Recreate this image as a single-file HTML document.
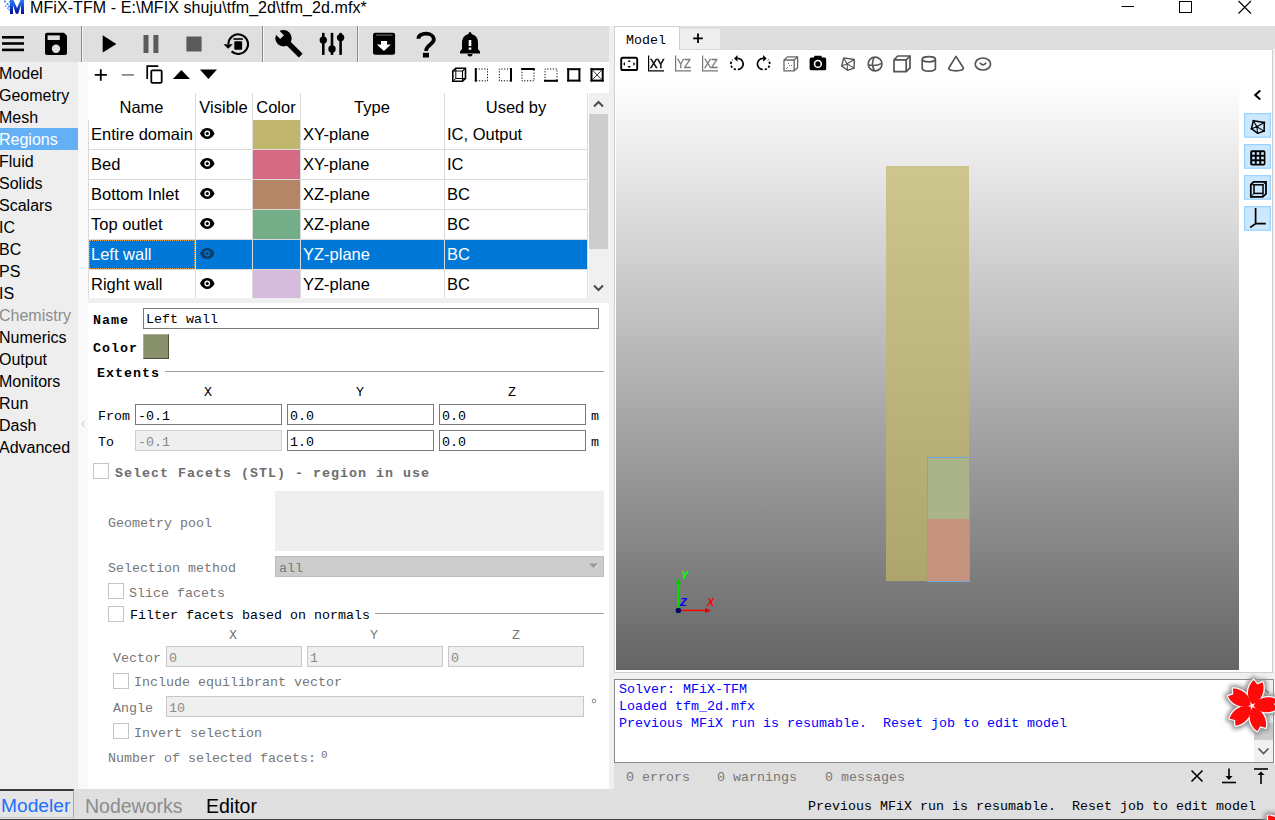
<!DOCTYPE html>
<html><head><meta charset="utf-8">
<style>
*{margin:0;padding:0;box-sizing:border-box}
html,body{width:1275px;height:820px;overflow:hidden;background:#fff;position:relative;font-family:"Liberation Sans",sans-serif;color:#000}
.a{position:absolute}
.s{font-family:"Liberation Sans",sans-serif;white-space:pre}
.m{font-family:"Liberation Mono",monospace;white-space:pre;font-size:13.33px}
.mb{font-family:"Liberation Mono",monospace;white-space:pre;font-size:13.33px;font-weight:bold;letter-spacing:1px}
svg{position:absolute;overflow:visible}
</style></head><body>

<!-- title bar -->
<div class="a" style="left:0;top:0;width:1275px;height:26px;background:#fff"></div>
<div class="a s" id="title" style="left:30px;top:-2px;font-size:16px;letter-spacing:0.08px;line-height:20px">MFiX-TFM - E:\MFIX shuju\tfm_2d\tfm_2d.mfx*</div>

<!-- toolbar -->
<div class="a" style="left:0;top:26px;width:609px;height:36px;background:#dfdfdf"></div>

<!-- sidebar -->
<div class="a" style="left:0;top:62px;width:78px;height:727px;background:#eeeeee"></div>
<div class="a" style="left:78px;top:62px;width:10px;height:727px;background:#f9f9f9"></div>
<div class="a" style="left:0;top:128px;width:78px;height:22px;background:#64b0f4"></div>

<!-- sidebar items -->
<div class="a s" style="left:-1px;top:62px;font-size:16px;line-height:24px;color:#000">Model</div>
<div class="a s" style="left:-1px;top:84px;font-size:16px;line-height:24px;color:#000">Geometry</div>
<div class="a s" style="left:-1px;top:106px;font-size:16px;line-height:24px;color:#000">Mesh</div>
<div class="a s" style="left:-1px;top:128px;font-size:16px;line-height:24px;color:#fff">Regions</div>
<div class="a s" style="left:-1px;top:150px;font-size:16px;line-height:24px;color:#000">Fluid</div>
<div class="a s" style="left:-1px;top:172px;font-size:16px;line-height:24px;color:#000">Solids</div>
<div class="a s" style="left:-1px;top:194px;font-size:16px;line-height:24px;color:#000">Scalars</div>
<div class="a s" style="left:-1px;top:216px;font-size:16px;line-height:24px;color:#000">IC</div>
<div class="a s" style="left:-1px;top:238px;font-size:16px;line-height:24px;color:#000">BC</div>
<div class="a s" style="left:-1px;top:260px;font-size:16px;line-height:24px;color:#000">PS</div>
<div class="a s" style="left:-1px;top:282px;font-size:16px;line-height:24px;color:#000">IS</div>
<div class="a s" style="left:-1px;top:304px;font-size:16px;line-height:24px;color:#8c8c8c">Chemistry</div>
<div class="a s" style="left:-1px;top:326px;font-size:16px;line-height:24px;color:#000">Numerics</div>
<div class="a s" style="left:-1px;top:348px;font-size:16px;line-height:24px;color:#000">Output</div>
<div class="a s" style="left:-1px;top:370px;font-size:16px;line-height:24px;color:#000">Monitors</div>
<div class="a s" style="left:-1px;top:392px;font-size:16px;line-height:24px;color:#000">Run</div>
<div class="a s" style="left:-1px;top:414px;font-size:16px;line-height:24px;color:#000">Dash</div>
<div class="a s" style="left:-1px;top:436px;font-size:16px;line-height:24px;color:#000">Advanced</div>

<svg style="left:0;top:0" width="100" height="500"><path d="M84.5 421 L82 424 L84.5 427" stroke="#c4c4c4" stroke-width="1" fill="none"/></svg>
<!-- left panel -->
<div class="a" style="left:88px;top:62px;width:521px;height:727px;background:#fff"></div>
<div class="a" style="left:609px;top:26px;width:6px;height:763px;background:#f0f0f0"></div>

<!-- right panel -->
<div class="a" style="left:615px;top:26px;width:660px;height:24px;background:#dedede"></div>
<div class="a" style="left:614px;top:49px;width:659px;height:624px;background:#fff;border:1px solid #cfcfcf;border-top-color:#d9d9d9"></div>
<div class="a" style="left:616px;top:79px;width:623px;height:591px;background:linear-gradient(#ffffff,#656565)"></div>

<div class="a" style="left:609px;top:673px;width:666px;height:6px;background:#f0f0f0"></div>
<div class="a" style="left:1273px;top:49px;width:2px;height:630px;background:#f0f0f0"></div>
<!-- console -->
<div class="a" style="left:614px;top:679px;width:660px;height:84px;background:#fff;border:1px solid #8a8a8a"></div>
<div class="a" style="left:614px;top:763px;width:661px;height:26px;background:#dfdfdf"></div>

<!-- bottom bar -->
<div class="a" style="left:0;top:789px;width:1275px;height:30px;background:#dfdfdf"></div>
<div class="a" style="left:0;top:819px;width:1275px;height:1px;background:#444"></div>

<!-- table -->
<div class="a s" style="left:88px;top:93px;width:107px;text-align:center;font-size:16.5px;line-height:29px">Name</div>
<div class="a s" style="left:195px;top:93px;width:57px;text-align:center;font-size:16.5px;line-height:29px">Visible</div>
<div class="a s" style="left:252px;top:93px;width:48px;text-align:center;font-size:16.5px;line-height:29px">Color</div>
<div class="a s" style="left:300px;top:93px;width:144px;text-align:center;font-size:16.5px;line-height:29px">Type</div>
<div class="a s" style="left:444px;top:93px;width:144px;text-align:center;font-size:16.5px;line-height:29px">Used by</div>
<div class="a" style="left:195px;top:93px;width:1px;height:205px;background:#dadada"></div>
<div class="a" style="left:252px;top:93px;width:1px;height:205px;background:#dadada"></div>
<div class="a" style="left:300px;top:93px;width:1px;height:205px;background:#dadada"></div>
<div class="a" style="left:444px;top:93px;width:1px;height:205px;background:#dadada"></div>
<div class="a" style="left:587px;top:93px;width:1px;height:205px;background:#dadada"></div>
<div class="a" style="left:88px;top:120px;width:1px;height:178px;background:#dadada"></div>
<div class="a" style="left:253px;top:120px;width:47px;height:29px;background:#c1b66e"></div>
<div class="a" style="left:89px;top:149px;width:499px;height:1px;background:#dadada"></div>
<div class="a s" style="left:91px;top:120px;font-size:16.5px;line-height:28px;color:#000">Entire domain</div>
<div class="a s" style="left:303px;top:120px;font-size:16.5px;line-height:28px;color:#000">XY-plane</div>
<div class="a s" style="left:447px;top:120px;font-size:16.5px;line-height:28px;color:#000">IC, Output</div>
<svg style="left:200px;top:128px" width="15" height="11" viewBox="0 0 15 11"><path d="M0 5.5 C3 -1.8 11.5 -1.8 14.5 5.5 C11.5 12.8 3 12.8 0 5.5Z" fill="#000"/><circle cx="7.25" cy="5.5" r="2.9" fill="#fff"/><circle cx="7.25" cy="5.5" r="1.6" fill="#000"/></svg>
<div class="a" style="left:253px;top:150px;width:47px;height:29px;background:#d56a85"></div>
<div class="a" style="left:89px;top:179px;width:499px;height:1px;background:#dadada"></div>
<div class="a s" style="left:91px;top:150px;font-size:16.5px;line-height:28px;color:#000">Bed</div>
<div class="a s" style="left:303px;top:150px;font-size:16.5px;line-height:28px;color:#000">XY-plane</div>
<div class="a s" style="left:447px;top:150px;font-size:16.5px;line-height:28px;color:#000">IC</div>
<svg style="left:200px;top:158px" width="15" height="11" viewBox="0 0 15 11"><path d="M0 5.5 C3 -1.8 11.5 -1.8 14.5 5.5 C11.5 12.8 3 12.8 0 5.5Z" fill="#000"/><circle cx="7.25" cy="5.5" r="2.9" fill="#fff"/><circle cx="7.25" cy="5.5" r="1.6" fill="#000"/></svg>
<div class="a" style="left:253px;top:180px;width:47px;height:29px;background:#b48567"></div>
<div class="a" style="left:89px;top:209px;width:499px;height:1px;background:#dadada"></div>
<div class="a s" style="left:91px;top:180px;font-size:16.5px;line-height:28px;color:#000">Bottom Inlet</div>
<div class="a s" style="left:303px;top:180px;font-size:16.5px;line-height:28px;color:#000">XZ-plane</div>
<div class="a s" style="left:447px;top:180px;font-size:16.5px;line-height:28px;color:#000">BC</div>
<svg style="left:200px;top:188px" width="15" height="11" viewBox="0 0 15 11"><path d="M0 5.5 C3 -1.8 11.5 -1.8 14.5 5.5 C11.5 12.8 3 12.8 0 5.5Z" fill="#000"/><circle cx="7.25" cy="5.5" r="2.9" fill="#fff"/><circle cx="7.25" cy="5.5" r="1.6" fill="#000"/></svg>
<div class="a" style="left:253px;top:210px;width:47px;height:29px;background:#73ae89"></div>
<div class="a" style="left:89px;top:239px;width:499px;height:1px;background:#dadada"></div>
<div class="a s" style="left:91px;top:210px;font-size:16.5px;line-height:28px;color:#000">Top outlet</div>
<div class="a s" style="left:303px;top:210px;font-size:16.5px;line-height:28px;color:#000">XZ-plane</div>
<div class="a s" style="left:447px;top:210px;font-size:16.5px;line-height:28px;color:#000">BC</div>
<svg style="left:200px;top:218px" width="15" height="11" viewBox="0 0 15 11"><path d="M0 5.5 C3 -1.8 11.5 -1.8 14.5 5.5 C11.5 12.8 3 12.8 0 5.5Z" fill="#000"/><circle cx="7.25" cy="5.5" r="2.9" fill="#fff"/><circle cx="7.25" cy="5.5" r="1.6" fill="#000"/></svg>
<div class="a" style="left:89px;top:240px;width:498px;height:29px;background:#0078d7"></div>
<div class="a" style="left:89px;top:240px;width:106px;height:29px;border:1px dotted #f29a3a"></div>
<div class="a" style="left:89px;top:269px;width:499px;height:1px;background:#dadada"></div>
<div class="a s" style="left:91px;top:240px;font-size:16.5px;line-height:28px;color:#fff">Left wall</div>
<div class="a s" style="left:303px;top:240px;font-size:16.5px;line-height:28px;color:#fff">YZ-plane</div>
<div class="a s" style="left:447px;top:240px;font-size:16.5px;line-height:28px;color:#fff">BC</div>
<svg style="left:200px;top:248px" width="15" height="11" viewBox="0 0 15 11"><path d="M0 5.5 C3 -1.8 11.5 -1.8 14.5 5.5 C11.5 12.8 3 12.8 0 5.5Z" fill="#0a3d6b"/><circle cx="7.25" cy="5.5" r="2.9" fill="#0078d7"/><circle cx="7.25" cy="5.5" r="1.6" fill="#0a3d6b"/></svg>
<div class="a" style="left:253px;top:270px;width:47px;height:29px;background:#d5bcdc"></div>
<div class="a" style="left:89px;top:299px;width:499px;height:1px;background:#dadada"></div>
<div class="a s" style="left:91px;top:270px;font-size:16.5px;line-height:28px;color:#000">Right wall</div>
<div class="a s" style="left:303px;top:270px;font-size:16.5px;line-height:28px;color:#000">YZ-plane</div>
<div class="a s" style="left:447px;top:270px;font-size:16.5px;line-height:28px;color:#000">BC</div>
<svg style="left:200px;top:278px" width="15" height="11" viewBox="0 0 15 11"><path d="M0 5.5 C3 -1.8 11.5 -1.8 14.5 5.5 C11.5 12.8 3 12.8 0 5.5Z" fill="#000"/><circle cx="7.25" cy="5.5" r="2.9" fill="#fff"/><circle cx="7.25" cy="5.5" r="1.6" fill="#000"/></svg>
<div class="a" style="left:195px;top:240px;width:1px;height:29px;background:#dadada"></div>
<div class="a" style="left:252px;top:240px;width:1px;height:29px;background:#dadada"></div>
<div class="a" style="left:300px;top:240px;width:1px;height:29px;background:#dadada"></div>
<div class="a" style="left:444px;top:240px;width:1px;height:29px;background:#dadada"></div>
<div class="a" style="left:589px;top:93px;width:20px;height:205px;background:#f0f0f0"></div>
<div class="a" style="left:589px;top:114px;width:19px;height:135px;background:#cdcdcd"></div>
<svg style="left:593px;top:99.5px" width="11" height="8"><path d="M1 6.5 L5.5 2 L10 6.5" stroke="#4a4a4a" stroke-width="2" fill="none"/></svg>
<svg style="left:593px;top:283.5px" width="11" height="8"><path d="M1 1.5 L5.5 6 L10 1.5" stroke="#4a4a4a" stroke-width="2" fill="none"/></svg>
<div class="a" style="left:88px;top:298px;width:521px;height:5px;background:#f0f0f0"></div>

<svg style="left:0;top:0" width="1275" height="820" viewBox="0 0 1275 820">
<!-- logo -->
<defs>
<linearGradient id="lg" x1="0" y1="0" x2="0" y2="1"><stop offset="0" stop-color="#2a7cff"/><stop offset="1" stop-color="#000c96"/></linearGradient>
</defs>
<path d="M10 0 L13.5 0 L17 8 L20.5 0 L24 0 L24 14 L21 14 L21 5 L18.2 13.8 L15.8 13.8 L13 5 L13 14 L10 14Z" fill="url(#lg)"/>
<g fill="#3a78f0" opacity="0.8"><rect x="4" y="0.5" width="2" height="2"/><rect x="6.5" y="3" width="2" height="2"/><rect x="5" y="5.5" width="1.5" height="1.5"/><rect x="8" y="5.5" width="2" height="2"/><rect x="7" y="7.5" width="1.5" height="1.5"/><rect x="9" y="1" width="1.5" height="1.5"/><rect x="8.5" y="9" width="1.5" height="1.5"/></g>
<!-- window controls -->
<path d="M1121.5 6.5 H1134" stroke="#000" stroke-width="1"/>
<rect x="1179.5" y="1.5" width="12" height="11" fill="none" stroke="#000" stroke-width="1"/>
<path d="M1238.5 1 L1251 13.5 M1251 1 L1238.5 13.5" stroke="#000" stroke-width="1.1"/>
<!-- toolbar -->
<g fill="#000">
<rect x="2" y="36" width="22" height="2.6"/><rect x="2" y="42.2" width="22" height="2.6"/><rect x="2" y="48.6" width="22" height="2.6"/>
<path d="M47 32.7 H64 L67 35.8 V53 Q67 55 65 55 H47 Q45 55 45 53 V34.7 Q45 32.7 47 32.7Z"/>
</g>
<rect x="47.6" y="35.4" width="12.2" height="4.6" fill="#dfdfdf"/>
<circle cx="56" cy="48.8" r="4.2" fill="#dfdfdf"/>
<rect x="81" y="26" width="1" height="36" fill="#8a8a8a"/><rect x="82" y="26" width="1" height="36" fill="#f4f4f4"/>
<path d="M102.7 35.3 L116.4 43.9 L102.7 52.5Z" fill="#000"/>
<rect x="143.5" y="35" width="5" height="18" fill="#5a5a5a"/><rect x="153.4" y="35" width="5" height="18" fill="#5a5a5a"/>
<rect x="186.4" y="36.5" width="15.2" height="15" fill="#5a5a5a"/>
<path d="M228.4 44 A9.8 9.8 0 1 1 231.6 51.4" stroke="#000" stroke-width="2.1" fill="none"/>
<path d="M223.5 44.3 H232.8 L228.2 48.8Z" fill="#000"/>
<rect x="234.3" y="41.2" width="7.8" height="8.6" rx="1" fill="#000"/>
<rect x="233.4" y="38.2" width="9.5" height="1.6" fill="#000"/>
<rect x="262" y="26" width="1" height="36" fill="#8a8a8a"/><rect x="263" y="26" width="1" height="36" fill="#f4f4f4"/>
<!-- wrench -->
<circle cx="283.5" cy="38.3" r="8.2" fill="#000"/>
<path d="M284 39 L300.7 55.6" stroke="#000" stroke-width="5.4"/>
<rect x="-2.6" y="-7" width="5.2" height="10" fill="#dfdfdf" transform="translate(280 35) rotate(-45)"/>
<!-- sliders -->
<g fill="#000"><rect x="322" y="32.9" width="2.6" height="22"/><rect x="330.7" y="32.9" width="2.6" height="22"/><rect x="339.3" y="32.9" width="2.6" height="22"/>
<circle cx="323.3" cy="40.1" r="3.7"/><circle cx="332" cy="48.9" r="3.7"/><circle cx="340.6" cy="37.6" r="3.7"/></g>
<rect x="357" y="26" width="1" height="36" fill="#8a8a8a"/><rect x="358" y="26" width="1" height="36" fill="#f4f4f4"/>
<!-- archive -->
<rect x="373" y="32.8" width="22.1" height="21.9" rx="2.2" fill="#000"/>
<rect x="376" y="34.6" width="16.5" height="0.9" fill="#888"/>
<path d="M381 41 H387.1 V44.4 H390.9 L383.9 51 L376.8 44.4 H381Z" fill="#fff"/>
<!-- ? -->
<path d="M418.4 38.8 C418.4 32 433.8 31.8 433.8 39.6 C433.8 44.4 426.1 45 426.1 51" stroke="#000" stroke-width="3.8" fill="none"/>
<rect x="422.9" y="52.8" width="6.1" height="4.7" fill="#000"/>
<!-- bell -->
<path d="M470 32 Q471.5 32 471.5 34 Q478 35.5 478 43 V49 L480 51.4 V53.5 H460 V51.4 L462 49 V43 Q462 35.5 468.5 34 Q468.5 32 470 32Z" fill="#000"/>
<path d="M467.5 54 A2.5 2.5 0 0 0 472.5 54Z" fill="#000"/>
<rect x="468.7" y="40" width="2.6" height="6" fill="#fff"/><rect x="468.7" y="47.5" width="2.6" height="2.2" fill="#fff"/>
</svg>

<svg style="left:0;top:0" width="1275" height="820" viewBox="0 0 1275 820">
<!-- table toolbar -->
<path d="M94.8 74.9 H106.9 M100.8 69.2 V80.8" stroke="#000" stroke-width="1.8"/>
<path d="M121.8 74.9 H133.9" stroke="#8a8a8a" stroke-width="1.8"/>
<path d="M147.2 79 V66.2 H158.3" stroke="#000" stroke-width="1.7" fill="none"/>
<rect x="151.3" y="70.3" width="10.4" height="12.6" rx="1.2" stroke="#000" stroke-width="1.8" fill="none"/>
<path d="M172.9 79 L181.4 70 L190 79Z" fill="#000"/>
<path d="M199.9 69.6 H217 L208.4 79Z" fill="#000"/>
<!-- frame icons -->
<g stroke="#000" fill="none">
<!-- cube -->
<path d="M452.8 71 L455.8 68.3 H465.5 V78.5 L462.5 81.2 H452.8Z" stroke-width="1.6"/>
<path d="M452.8 71 H462.5 V81.2 M462.5 71 L465.5 68.3" stroke-width="1.1"/>
<path d="M455.8 68.3 V78.5 H465.5 M455.8 78.5 L452.8 81.2" stroke-width="1"/>
<g stroke-dasharray="1.2 1.6" stroke-width="1">
<path d="M475.8 69 H487.5 V80.8 H475.8"/>
<path d="M511 69 H499.3 V80.8 H511"/>
<path d="M522 69 V80.8 H534 V69"/>
<path d="M545 80.8 V69 H557 V80.8"/>
</g>
<path d="M475.8 68.6 V81" stroke-width="2"/>
<path d="M511 68.6 V81" stroke-width="2"/>
<path d="M521.8 69 H534.2" stroke-width="2"/>
<path d="M544.8 80.8 H557.2" stroke-width="2"/>
<rect x="568.2" y="69.2" width="11.2" height="11.4" stroke-width="2"/>
<rect x="591.5" y="69.2" width="11.2" height="11.4" stroke-width="2"/>
<path d="M592.5 70.2 L601.7 79.6 M601.7 70.2 L592.5 79.6" stroke-width="0.8"/>
</g>
<g fill="#000">
<circle cx="475.8" cy="69" r="1.1"/><circle cx="475.8" cy="80.8" r="1.1"/>
<circle cx="511" cy="69" r="1.1"/><circle cx="511" cy="80.8" r="1.1"/>
<circle cx="522" cy="69" r="1.1"/><circle cx="534" cy="69" r="1.1"/>
<circle cx="545" cy="80.8" r="1.1"/><circle cx="557" cy="80.8" r="1.1"/>
<circle cx="568.2" cy="69.2" r="1.1"/><circle cx="579.4" cy="69.2" r="1.1"/><circle cx="568.2" cy="80.6" r="1.1"/><circle cx="579.4" cy="80.6" r="1.1"/>
<circle cx="591.5" cy="69.2" r="1.1"/><circle cx="602.7" cy="69.2" r="1.1"/><circle cx="591.5" cy="80.6" r="1.1"/><circle cx="602.7" cy="80.6" r="1.1"/>
</g>
</svg>


<!-- right tabs -->
<div class="a" style="left:614px;top:26px;width:66px;height:24px;background:#fff;border-left:1px solid #cfcfcf;border-top:1px solid #cfcfcf;border-right:1px solid #cfcfcf"></div>
<div class="a m" style="left:626px;top:32.5px;font-size:13.33px;line-height:16px">Model</div>
<div class="a" style="left:680px;top:29px;width:40px;height:20px;background:#efefef"></div>
<svg style="left:0;top:0" width="1275" height="820"><path d="M698 33.5 V43 M693.2 38.3 H702.8" stroke="#000" stroke-width="1.8"/></svg>
<svg style="left:0;top:0" width="1275" height="820" viewBox="0 0 1275 820">
<!-- fit -->
<rect x="621.2" y="57.8" width="16" height="12.2" rx="1.6" stroke="#000" stroke-width="1.9" fill="none"/>
<g fill="#000"><path d="M627.4 61.8 L629.2 59.9 L631 61.8Z"/><path d="M627.4 66 L629.2 67.9 L631 66Z"/><path d="M625 62.1 L623.1 63.9 L625 65.7Z"/><path d="M633.4 62.1 L635.3 63.9 L633.4 65.7Z"/></g>
<!-- XY YZ XZ -->
<path d="M648.6 55.6 V70.8 H664" stroke="#000" stroke-width="1.2" fill="none"/>
<path d="M675.6 55.6 V70.8 H691" stroke="#777" stroke-width="1.2" fill="none"/>
<path d="M702.6 55.6 V70.8 H718" stroke="#777" stroke-width="1.2" fill="none"/>
</svg>
<div class="a s" style="left:650px;top:55.5px;font-size:13px;line-height:15px;letter-spacing:-0.5px;color:#000;-webkit-text-stroke:0.5px #000;transform:scaleX(0.86);transform-origin:0 0;">XY</div>
<div class="a s" style="left:677px;top:55.5px;font-size:13px;line-height:15px;letter-spacing:-0.5px;color:#777;-webkit-text-stroke:0.3px #777;transform:scaleX(0.86);transform-origin:0 0;">YZ</div>
<div class="a s" style="left:704px;top:55.5px;font-size:13px;line-height:15px;letter-spacing:-0.5px;color:#777;-webkit-text-stroke:0.3px #777;transform:scaleX(0.86);transform-origin:0 0;">XZ</div>
<svg style="left:0;top:0" width="1275" height="820" viewBox="0 0 1275 820">
<!-- rotate left -->
<path d="M737.3 58.3 A5.6 5.6 0 1 1 737.8 69.6" stroke="#000" stroke-width="1.7" fill="none"/>
<path d="M735.9 69.4 A5.6 5.6 0 0 1 732.6 59.8" stroke="#000" stroke-width="1.7" fill="none" stroke-dasharray="2.3 1.7"/>
<path d="M737.5 54.9 L734 58.4 L737.5 61.8Z" fill="#000"/>
<!-- rotate right -->
<path d="M763.3 58.3 A5.6 5.6 0 1 0 762.8 69.6" stroke="#000" stroke-width="1.7" fill="none"/>
<path d="M764.7 69.4 A5.6 5.6 0 0 0 768 59.8" stroke="#000" stroke-width="1.7" fill="none" stroke-dasharray="2.3 1.7"/>
<path d="M763.1 54.9 L766.6 58.4 L763.1 61.8Z" fill="#000"/>
<!-- dotted cube -->
<g stroke="#666" stroke-width="1.3" fill="none">
<path d="M784 60 L787.5 56.8 H797.6 V67.6 L794.2 70.8 H784Z"/>
<path d="M784 60 H794.2 V70.8 M794.2 60 L797.6 56.8"/>
</g>
<g fill="#777"><rect x="788" y="63" width="1" height="1"/><rect x="789" y="65" width="1" height="1"/><rect x="787" y="67" width="1" height="1"/><rect x="791" y="65" width="1" height="1"/><rect x="786" y="68" width="1" height="1"/></g>
<!-- camera -->
<path d="M811.3 57.6 H813.8 L814.5 55.8 H821.3 L822 57.6 H824.6 Q826.2 57.6 826.2 59.2 V68.7 Q826.2 70.3 824.6 70.3 H811.3 Q809.6 70.3 809.6 68.7 V59.2 Q809.6 57.6 811.3 57.6Z" fill="#000"/>
<circle cx="817.9" cy="63.9" r="3.4" stroke="#fff" stroke-width="1.6" fill="none"/>
<!-- wireframe -->
<g stroke="#555" stroke-width="1.4" fill="none" stroke-linejoin="round">
<path d="M843.7 57.9 L854.3 59.5 L854.1 68.1 L847.5 70.3 L841.7 66Z"/>
<path d="M847 63.8 L843.7 57.9 M847 63.8 L854.3 59.5 M847 63.8 L854.1 68.1 M847 63.8 L847.5 70.3 M847 63.8 L841.7 66" stroke-width="1.1"/>
</g>
<!-- sphere -->
<g stroke="#555" stroke-width="1.6" fill="none">
<circle cx="875.1" cy="64" r="6.9"/>
<path d="M874.2 57.1 Q870.5 64 874.6 70.9"/>
<path d="M868.3 64.8 Q875 66.8 881.9 63.4"/>
</g>
<!-- cube -->
<g stroke="#555" stroke-width="1.7" fill="none">
<path d="M894 59.8 L897.8 56 H910 V67.8 L906.2 71.6 H894Z"/>
<path d="M894 59.8 H906.2 V71.6 M906.2 59.8 L910 56"/>
</g>
<!-- cylinder -->
<g stroke="#555" stroke-width="1.7" fill="none">
<ellipse cx="928.8" cy="59.2" rx="6.6" ry="2.6"/>
<path d="M922.2 59.2 V68.6 A6.6 2.6 0 0 0 935.4 68.6 V59.2"/>
</g>
<!-- cone -->
<path d="M956 56.4 L948.8 68 Q948 70.6 956 70.8 Q964 70.6 963.4 68Z" stroke="#555" stroke-width="1.7" fill="none" stroke-linejoin="round"/>
<!-- torus -->
<ellipse cx="982.9" cy="64" rx="7.7" ry="6" stroke="#555" stroke-width="1.7" fill="none"/>
<path d="M979.8 62.8 Q983 66.8 986.2 62.8" stroke="#555" stroke-width="1.7" fill="none"/>
<!-- side chevron -->
<path d="M1260.3 90.5 L1255.2 95 L1260.3 99.5" stroke="#000" stroke-width="2" fill="none"/>
<!-- side buttons -->
<g fill="#cce8ff" stroke="#99d1ff" stroke-width="1.2">
<rect x="1244.6" y="113.6" width="25.8" height="23.6"/>
<rect x="1244.6" y="144.6" width="25.8" height="23.6"/>
<rect x="1244.6" y="175.6" width="25.8" height="23.6"/>
<rect x="1244.6" y="206.6" width="25.8" height="23.6"/>
</g>
<g stroke="#000" fill="none">
<path d="M1253.4 120.7 L1264.3 122.4 L1264.1 131.1 L1257.7 133.3 L1251.5 128.7Z" stroke-width="1.5" stroke-linejoin="round"/>
<path d="M1256.8 126.7 L1253.4 120.7 M1256.8 126.7 L1264.3 122.4 M1256.8 126.7 L1264.1 131.1 M1256.8 126.7 L1257.7 133.3 M1256.8 126.7 L1251.5 128.7" stroke-width="1.1"/>
</g>
<g fill="#000"><circle cx="1256.8" cy="126.7" r="1.2"/><circle cx="1253.4" cy="120.7" r="1"/><circle cx="1264.3" cy="122.4" r="1"/><circle cx="1264.1" cy="131.1" r="1"/><circle cx="1251.5" cy="128.7" r="1"/></g>
<rect x="1250.2" y="150.2" width="15.2" height="15.4" rx="1.8" fill="#000"/>
<g fill="#cce8ff"><rect x="1252.2" y="152.2" width="2.6" height="2.6"/><rect x="1256.7" y="152.2" width="2.6" height="2.6"/><rect x="1261.2" y="152.2" width="2.6" height="2.6"/><rect x="1252.2" y="156.7" width="2.6" height="2.6"/><rect x="1256.7" y="156.7" width="2.6" height="2.6"/><rect x="1261.2" y="156.7" width="2.6" height="2.6"/><rect x="1252.2" y="161.2" width="2.6" height="2.6"/><rect x="1256.7" y="161.2" width="2.6" height="2.6"/><rect x="1261.2" y="161.2" width="2.6" height="2.6"/></g>
<g stroke="#000" fill="none">
<path d="M1250.8 184.7 L1253.6 181.8 H1266 V193.9 L1262.7 196.9 H1250.8Z" stroke-width="1.8" stroke-linejoin="round"/>
<rect x="1254" y="184.8" width="9" height="8.6" stroke-width="1.5"/>
<path d="M1250.8 184.7 H1254 M1263 193.4 L1262.7 196.9 M1263 184.8 L1266 181.8 M1254 193.4 L1250.8 196.9" stroke-width="1"/>
<path d="M1255.6 208 V223.6 H1265.8 M1255.6 223.6 L1250.2 227.5" stroke-width="1.7"/>
</g>
</svg>

<!-- form -->
<div class="a mb" style="left:93px;top:312px;line-height:17px;color:#000;">Name</div>
<div class="a" style="left:143px;top:308px;width:456px;height:21px;background:#fff;border:1px solid #7a7a7a"></div>
<div class="a m" style="left:146px;top:311px;line-height:17px;color:#000;">Left wall</div>
<div class="a mb" style="left:93px;top:340px;line-height:17px;color:#000;">Color</div>
<div class="a" style="left:143px;top:334px;width:26px;height:25px;background:#87906a;border-right:1px solid #4a4f38;border-bottom:1px solid #4a4f38;border-top:1px solid #a9b08f;border-left:1px solid #a9b08f"></div>
<div class="a mb" style="left:97px;top:365px;line-height:17px;color:#000;">Extents</div>
<div class="a" style="left:165px;top:371px;width:439px;height:1px;background:#a0a0a0"></div>
<div class="a m" style="left:188px;width:40px;text-align:center;top:384px;line-height:17px">X</div>
<div class="a m" style="left:340px;width:40px;text-align:center;top:384px;line-height:17px">Y</div>
<div class="a m" style="left:492px;width:40px;text-align:center;top:384px;line-height:17px">Z</div>
<div class="a m" style="left:98px;top:408px;line-height:17px;color:#000;">From</div>
<div class="a" style="left:135px;top:404px;width:147px;height:21px;background:#fff;border:1px solid #7a7a7a"></div>
<div class="a" style="left:287px;top:404px;width:147px;height:21px;background:#fff;border:1px solid #7a7a7a"></div>
<div class="a" style="left:439px;top:404px;width:147px;height:21px;background:#fff;border:1px solid #7a7a7a"></div>
<div class="a m" style="left:138px;top:408px;line-height:17px;color:#000;">-0.1</div>
<div class="a m" style="left:290px;top:408px;line-height:17px;color:#000;">0.0</div>
<div class="a m" style="left:442px;top:408px;line-height:17px;color:#000;">0.0</div>
<div class="a m" style="left:591px;top:408px;line-height:17px;color:#000;">m</div>
<div class="a m" style="left:98px;top:434px;line-height:17px;color:#000;">To</div>
<div class="a" style="left:135px;top:430px;width:147px;height:21px;background:#efefef;border:1px solid #cfcfcf"></div>
<div class="a" style="left:287px;top:430px;width:147px;height:21px;background:#fff;border:1px solid #7a7a7a"></div>
<div class="a" style="left:439px;top:430px;width:147px;height:21px;background:#fff;border:1px solid #7a7a7a"></div>
<div class="a m" style="left:138px;top:434px;line-height:17px;color:#8a8a8a;">-0.1</div>
<div class="a m" style="left:290px;top:434px;line-height:17px;color:#000;">1.0</div>
<div class="a m" style="left:442px;top:434px;line-height:17px;color:#000;">0.0</div>
<div class="a m" style="left:591px;top:434px;line-height:17px;color:#000;">m</div>
<div class="a" style="left:93px;top:463px;width:16px;height:16px;background:#fff;border:1px solid #c4c4c4"></div>
<div class="a mb" style="left:115px;top:465px;line-height:17px;color:#6d6d6d;">Select Facets (STL) - region in use</div>
<div class="a m" style="left:108px;top:515px;line-height:17px;color:#777;">Geometry pool</div>
<div class="a" style="left:275px;top:491px;width:329px;height:60px;background:#efefef"></div>
<div class="a m" style="left:108px;top:560px;line-height:17px;color:#777;">Selection method</div>
<div class="a" style="left:275px;top:556px;width:329px;height:21px;background:#cccccc;border:1px solid #bdbdbd"></div>
<div class="a m" style="left:279px;top:560px;line-height:17px;color:#777;">all</div>
<svg style="left:0;top:0" width="1275" height="820"><path d="M589 563.5 H599 L594 568.5Z" fill="#9a9a9a"/><path d="M594 568.5 L598.5 564" stroke="#fff" stroke-width="1"/></svg>
<div class="a" style="left:108px;top:583px;width:16px;height:16px;background:#fff;border:1px solid #c4c4c4"></div>
<div class="a m" style="left:129px;top:585px;line-height:17px;color:#777;">Slice facets</div>
<div class="a" style="left:108px;top:606px;width:16px;height:16px;background:#fff;border:1px solid #c4c4c4"></div>
<div class="a m" style="left:130px;top:607px;line-height:17px;color:#000;">Filter facets based on normals</div>
<div class="a" style="left:375px;top:613px;width:229px;height:1px;background:#a0a0a0"></div>
<div class="a m" style="left:213px;width:40px;text-align:center;top:627px;line-height:17px;color:#777">X</div>
<div class="a m" style="left:354px;width:40px;text-align:center;top:627px;line-height:17px;color:#777">Y</div>
<div class="a m" style="left:496px;width:40px;text-align:center;top:627px;line-height:17px;color:#777">Z</div>
<div class="a m" style="left:113px;top:650px;line-height:17px;color:#777;">Vector</div>
<div class="a" style="left:166px;top:646px;width:136px;height:21px;background:#efefef;border:1px solid #c8c8c8"></div>
<div class="a" style="left:307px;top:646px;width:136px;height:21px;background:#efefef;border:1px solid #c8c8c8"></div>
<div class="a" style="left:448px;top:646px;width:136px;height:21px;background:#efefef;border:1px solid #c8c8c8"></div>
<div class="a m" style="left:169px;top:650px;line-height:17px;color:#8a8a8a;">0</div>
<div class="a m" style="left:310px;top:650px;line-height:17px;color:#8a8a8a;">1</div>
<div class="a m" style="left:451px;top:650px;line-height:17px;color:#8a8a8a;">0</div>
<div class="a" style="left:113px;top:673px;width:16px;height:16px;background:#fff;border:1px solid #c4c4c4"></div>
<div class="a m" style="left:134px;top:674px;line-height:17px;color:#777;">Include equilibrant vector</div>
<div class="a m" style="left:113px;top:700px;line-height:17px;color:#777;">Angle</div>
<div class="a" style="left:166px;top:696px;width:418px;height:21px;background:#efefef;border:1px solid #c8c8c8"></div>
<div class="a m" style="left:169px;top:700px;line-height:17px;color:#8a8a8a;">10</div>
<svg style="left:0;top:0" width="1275" height="820"><circle cx="594" cy="701" r="1.8" stroke="#777" stroke-width="0.9" fill="none"/></svg>
<div class="a" style="left:113px;top:723px;width:16px;height:16px;background:#fff;border:1px solid #c4c4c4"></div>
<div class="a m" style="left:134px;top:725px;line-height:17px;color:#777;">Invert selection</div>
<div class="a m" style="left:108px;top:750px;line-height:17px;color:#777;">Number of selected facets:</div>
<div class="a m" style="left:321px;top:748px;font-size:11px;line-height:14px;color:#777">0</div>

<!-- viewport contents -->
<div class="a" style="left:886px;top:166px;width:83px;height:415px;background:rgba(193,182,104,0.7)"></div>
<div class="a" style="left:927px;top:457px;width:42px;height:62px;background:#abb489"></div>
<div class="a" style="left:927px;top:519px;width:42px;height:62px;background:#c5927d"></div>
<div class="a" style="left:926.5px;top:456.5px;width:43px;height:125px;border:1px solid #6fa8dc"></div>
<svg style="left:0;top:0" width="1275" height="820" viewBox="0 0 1275 820">
<path d="M678.4 610 V583" stroke="#00e600" stroke-width="1.4"/>
<path d="M675.9 584 L678.4 578 L680.9 584Z" fill="#00c800"/>
<path d="M679 610.4 H706" stroke="#ff0000" stroke-width="1.4"/>
<path d="M705 607.9 L711 610.4 L705 612.9Z" fill="#e00000"/>
<circle cx="678.4" cy="610.4" r="2.7" fill="#000060"/>
</svg>
<div class="a s" style="left:681px;top:569px;font-size:11px;line-height:12px;font-weight:bold;font-style:italic;color:#00ff00">Y</div>
<div class="a s" style="left:680px;top:596px;font-size:11px;line-height:12px;font-weight:bold;font-style:italic;color:#0000ff">Z</div>
<div class="a s" style="left:707px;top:596px;font-size:11px;line-height:12px;font-weight:bold;font-style:italic;color:#ff0000">X</div>

<!-- console text -->
<div class="a m" style="left:619px;top:680.5px;line-height:17px;color:#0000ff">Solver: MFiX-TFM
Loaded tfm_2d.mfx
Previous MFiX run is resumable.  Reset job to edit model</div>
<div class="a" style="left:1254px;top:680px;width:19px;height:82px;background:#f0f0f0"></div>
<div class="a" style="left:1254px;top:723px;width:19px;height:17px;background:#cdcdcd"></div>
<svg style="left:0;top:0" width="1275" height="820" viewBox="0 0 1275 820">
<path d="M1258.5 688 L1263.5 693 L1268.5 688" stroke="#555" stroke-width="1.6" fill="none" transform="rotate(180 1263.5 690.5)"/>
<path d="M1258.5 748.5 L1263.5 753.5 L1268.5 748.5" stroke="#555" stroke-width="1.6" fill="none"/>
</svg>
<!-- footer -->
<div class="a m" style="left:626px;top:768.5px;line-height:17px;color:#777">0 errors</div>
<div class="a m" style="left:717px;top:768.5px;line-height:17px;color:#777">0 warnings</div>
<div class="a m" style="left:825px;top:768.5px;line-height:17px;color:#777">0 messages</div>
<svg style="left:0;top:0" width="1275" height="820" viewBox="0 0 1275 820">
<path d="M1191.5 770.5 L1202.5 781.5 M1202.5 770.5 L1191.5 781.5" stroke="#000" stroke-width="1.6"/>
<path d="M1229 768.5 V778" stroke="#000" stroke-width="1.6"/>
<path d="M1225.5 776 L1229 780 L1232.5 776Z" fill="#000"/>
<path d="M1222 782.5 H1236" stroke="#000" stroke-width="1.6"/>
<path d="M1254 769 H1268" stroke="#000" stroke-width="1.6"/>
<path d="M1261 774 V784" stroke="#000" stroke-width="1.6"/>
<path d="M1257.5 775 L1261 771.5 L1264.5 775Z" fill="#000"/>
</svg>
<!-- status bar -->
<div class="a m" style="left:808px;top:798px;line-height:17px;color:#000">Previous MFiX run is resumable.  Reset job to edit model</div>
<!-- bottom tabs -->
<div class="a" style="left:0;top:789px;width:74px;height:29px;background:#e5e5e5;border-top:2px solid #3a3a3a;border-right:1px solid #a8a8a8;border-bottom:1px solid #cacaca"></div>
<div class="a s" style="left:1px;top:793px;font-size:19.2px;line-height:26px;color:#1e6fff">Modeler</div>
<div class="a s" style="left:85px;top:793px;font-size:19.5px;line-height:26px;color:#8c8c8c">Nodeworks</div>
<div class="a s" style="left:206px;top:793px;font-size:19.5px;line-height:26px;color:#000">Editor</div>

<!-- flower -->
<svg style="left:0;top:0" width="1275" height="820" viewBox="0 0 1275 820">
<defs>
<filter id="glow" x="-50%" y="-50%" width="200%" height="200%"><feGaussianBlur stdDeviation="2"/></filter>
<path id="petal" d="M0 -1.5 C-8.5 -7 -9.5 -18 -4.6 -25.5 L0 -22 L4.6 -25.5 C9.5 -18 8.5 -7 0 -1.5Z"/>
<g id="fl"><use href="#petal" transform="rotate(14)"/><use href="#petal" transform="rotate(86)"/><use href="#petal" transform="rotate(158)"/><use href="#petal" transform="rotate(230)"/><use href="#petal" transform="rotate(302)"/></g>
</defs>
<g transform="translate(1252 705.8)">
<use href="#fl" fill="#909090" stroke="#909090" stroke-width="7" stroke-linejoin="round" filter="url(#glow)"/>
<use href="#fl" fill="#fff" stroke="#fff" stroke-width="2.4" stroke-linejoin="round"/>
<use href="#fl" fill="#ff0a0a"/>
</g>
<g transform="translate(1287 833)">
<use href="#fl" fill="#909090" stroke="#909090" stroke-width="7" stroke-linejoin="round" filter="url(#glow)"/>
<use href="#fl" fill="#fff" stroke="#fff" stroke-width="2.4" stroke-linejoin="round"/>
<use href="#fl" fill="#ff0a0a"/>
</g>
</svg>

</body></html>
